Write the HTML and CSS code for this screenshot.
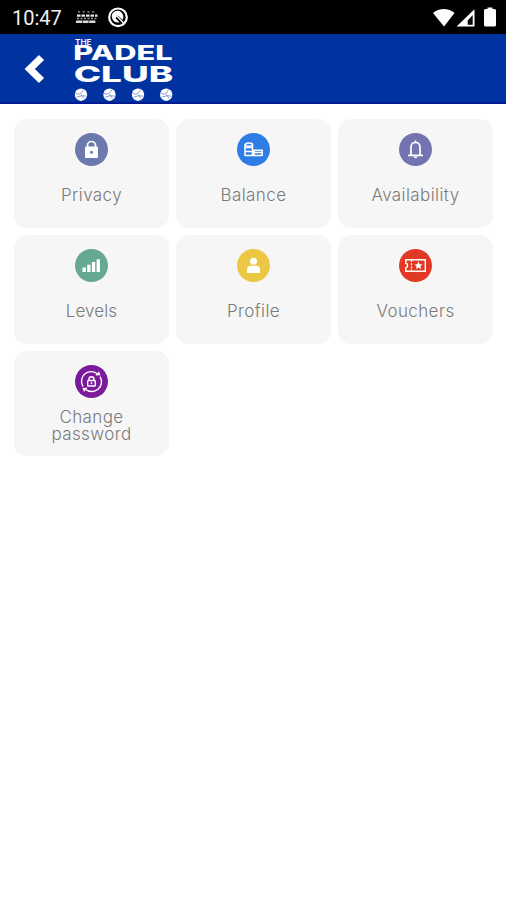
FILE: index.html
```
<!DOCTYPE html>
<html lang="en">

<head>
    <title>The Padel Club</title>
    <meta charset="utf-8">
    <meta name="viewport" content="width=device-width, initial-scale=1">
    <link rel="stylesheet" href="styles.css">
</head>

<body>
    <div class="status_bar">
        <span class="clock">10:47</span>
        <svg class="status_left" width="54" height="24" viewBox="75 5 54 24">
            <g stroke="#fff" fill="none">
                <path d="M78 11.8h18" stroke-width="1.3" stroke-dasharray="2 2.7" opacity=".65" />
                <path d="M77 15.7h20.5" stroke-width="2.2" stroke-dasharray="3.5 1" opacity=".9" />
                <path d="M77 18.5h20" stroke-width="1.3" stroke-dasharray="2 1.5" opacity=".6" />
                <path d="M76 21.7h20" stroke-width="2.4" stroke-dasharray="6 .6" opacity=".85" />
                <circle cx="118" cy="17.3" r="8.8" stroke-width="2.2" />
            </g>
            <path d="M112.6 19.5a5.7 5.7 0 0 1 9.5-6.3c1.5 1.7 1.7 4.6.4 6.6l-4.5-4.3-2.5 2.4 4 4.3c-3 .8-5.6-.2-6.900-2.700z" fill="#fff" />
            <path d="M117 16l6.5 7" stroke="#fff" stroke-width="1.5" />
        </svg>
        <svg class="status_right" width="66" height="24" viewBox="432 4.500 66 24" fill="#fff">
            <path d="M433 12.500c6-5.300 15.500-5.300 21.500 0L444 26z" />
            <path d="M474.500 8.800v17.200H456.500zM472.700 14.500l-5 5.500v4.200h5z" fill-rule="evenodd" />
            <path d="M487.500 8.500v-1.500h5v1.500h2q1.500 0 1.500 1.500v14.500q0 1.500-1.500 1.500h-9q-1.500 0-1.500-1.500v-14.500q0-1.500 1.500-1.500z" />
        </svg>
    </div>

    <div class="header">
        <button class="back_button" type="button" aria-label="Back">
            <svg width="22" height="30" viewBox="0 0 22 30">
                <path d="M17.5 3.5L5.800 15l11.700 11.500" fill="none" stroke="#fff" stroke-width="7.3" />
            </svg>
        </button>
        <svg class="logo" width="104" height="68" viewBox="72 34 104 68">
            <text class="logo_the" x="75" y="44.5" textLength="16.5" lengthAdjust="spacingAndGlyphs">THE</text>
            <text class="logo_padel" x="73.3" y="60" textLength="99.5" lengthAdjust="spacingAndGlyphs">PADEL</text>
            <text class="logo_club" x="73.7" y="82" textLength="99.5" lengthAdjust="spacingAndGlyphs">CLUB</text>
            <defs>
                <g id="ball">
                    <circle r="6.2" fill="#fff" />
                    <path d="M-5.5-1.5Q-1 1.5 2.500-5M-4.500 2.500Q1 0 5.500 1.500M0-.5L3 4" fill="none" stroke="#7d94cf" stroke-width=".9" />
                </g>
            </defs>
            <use href="#ball" x="81" y="94.7" />
            <use href="#ball" x="109.5" y="94.7" />
            <use href="#ball" x="138" y="94.7" />
            <use href="#ball" x="166.2" y="94.7" />
        </svg>
    </div>

    <div class="menu">
        <div class="card">
            <svg class="icon" viewBox="0 0 33 33">
                <circle cx="16.5" cy="16.5" r="16.5" fill="#6b79ad" />
                <path d="M12.5 15v-2.500a4 4 0 0 1 8 0V15" fill="none" stroke="#fff" stroke-width="1.7" />
                <rect x="10" y="13.5" width="13" height="11.5" rx="1.3" fill="#fff" />
                <circle cx="16.5" cy="19.3" r="1.5" fill="#6b79ad" />
            </svg>
            <div class="label">Privacy</div>
        </div>
        <div class="card">
            <svg class="icon" viewBox="0 0 33 33">
                <circle cx="16.5" cy="16.5" r="16.5" fill="#2d7de4" />
                <g fill="none" stroke="#fff" stroke-width="1.5">
                    <path d="M8 11v12M7.500 14.500h7.500M7.500 18.500h8M7.500 22.500h17.500M16.500 19.500h8.500" />
                    <ellipse cx="12" cy="11.6" rx="3.5" ry="1.6" />
                    <path d="M15.5 11.500v11M17 22.500v-5.200h8.200v5.800" />
                </g>
            </svg>
            <div class="label">Balance</div>
        </div>
        <div class="card">
            <svg class="icon" viewBox="0 0 33 33">
                <circle cx="16.5" cy="16.5" r="16.5" fill="#7475b0" />
                <path d="M12 22v-7.500q0-5 4.500-5t4.500 5V22M9 22.300h15M16.500 7.500v2" fill="none" stroke="#fff" stroke-width="1.7" />
                <path d="M14.5 23.500h4a2 1.800 0 0 1-4 0z" fill="#fff" />
            </svg>
            <div class="label">Availability</div>
        </div>
        <div class="card">
            <svg class="icon" viewBox="0 0 33 33">
                <circle cx="16.5" cy="16.5" r="16.5" fill="#67a894" />
                <path d="M7.500 18.500h3.300v4.500H7.500zM12.200 15.800h3.300V23h-3.300zM16.900 13h3.300v10h-3.300zM21.600 10.200h3.300V23h-3.300z" fill="#fff" />
            </svg>
            <div class="label label_narrow">Levels</div>
        </div>
        <div class="card">
            <svg class="icon" viewBox="0 0 33 33">
                <circle cx="16.5" cy="16.5" r="16.5" fill="#ecc744" />
                <circle cx="16.5" cy="12.3" r="3.5" fill="#fff" />
                <path d="M10 24v-3.500q0-3.800 4-3.800h5q4 0 4 3.800V24z" fill="#fff" />
            </svg>
            <div class="label">Profile</div>
        </div>
        <div class="card">
            <svg class="icon" viewBox="0 0 33 33">
                <circle cx="16.5" cy="16.5" r="16.5" fill="#e13a24" />
                <path d="M6.800 10.800h19.500v11.500H6.800v-3.500a2.300 2.300 0 0 0 0-4.500z" fill="none" stroke="#fff" stroke-width="1.4" />
                <path d="M12.5 11v11" stroke="#fff" stroke-width="1.2" stroke-dasharray="2 1.2" />
                <path d="M19.500 12.500l1.200 2.700 2.900.2-2.200 1.900.7 2.900-2.600-1.600-2.600 1.600.7-2.900-2.200-1.900 2.900-.2z" fill="#fff" />
            </svg>
            <div class="label">Vouchers</div>
        </div>
        <div class="card">
            <svg class="icon" viewBox="0 0 33 33">
                <circle cx="16.5" cy="16.5" r="16.5" fill="#7c1a9c" />
                <g fill="none" stroke="#fff" stroke-width="1.4">
                    <path d="M22.800 9.200A9.700 9.700 0 0 0 8 21.500M10.200 23.900A9.700 9.700 0 0 0 25 11.600" />
                    <path d="M14 15.500v-1.200a2.500 2.500 0 0 1 5 0v1.200" />
                    <rect x="12.7" y="15.5" width="7.6" height="5.5" rx=".8" />
                    <path d="M16.500 17.200v2" />
                </g>
                <path d="M20.500 10.500l5-.3-1.500-4zM12.500 22.600l-5 .3 1.500 4z" fill="#fff" />
            </svg>
            <div class="label two_lines">Change<br>password</div>
        </div>
    </div>
</body>

</html>
```
FILE: styles.css
```
:root {
    --header_color: #0033a0;
    --card_color: #f6f6f6;
    --text_color: #7a7a7a;
}

* {
    box-sizing: border-box;
}

body {
    margin: 0;
    background: white;
    color: var(--text_color);
    font-family: Inter, "Open Sans", sans-serif;
}

svg {
    display: block;
}

.status_bar {
    display: flex;
    align-items: center;
    height: 34px;
    padding: 0 8px 0 12px;
    background: black;
    color: #f0f0f0;
}

.clock {
    width: 63px;
    padding-top: 2px;
    font-family: Roboto, sans-serif;
    font-size: 20px;
    line-height: 24px;
}

.status_right {
    margin-left: auto;
}

.header {
    display: flex;
    align-items: center;
    height: 70px;
    padding-left: 24px;
    background: var(--header_color);
    border-bottom: 2px solid #001b91;
}

.back_button {
    width: 48px;
    padding: 2px 0 0;
    border: none;
    background: none;
}

.logo text {
    fill: white;
    font-weight: 800;
}

.logo .logo_the {
    font-size: 8px;
    font-weight: 600;
}

.logo_padel {
    font-size: 19.5px;
}

.logo_club {
    font-size: 22px;
}

.menu {
    display: grid;
    grid-template-columns: repeat(3, 1fr);
    grid-template-rows: 109px 109px 105px;
    gap: 7px;
    padding: 14.5px 13px 14.5px 14px;
}

.card {
    display: flex;
    flex-direction: column;
    align-items: center;
    padding-top: 14px;
    background: var(--card_color);
    border-radius: 13px;
}

.icon {
    width: 33px;
    height: 33px;
}

.label {
    margin-top: 19px;
    font-size: 17px;
    font-weight: 300;
    line-height: 20px;
    letter-spacing: 0.4px;
    text-align: center;
}

.label_narrow {
    letter-spacing: 0.1px;
}

.two_lines {
    margin-top: 11.5px;
    line-height: 17px;
}
```
